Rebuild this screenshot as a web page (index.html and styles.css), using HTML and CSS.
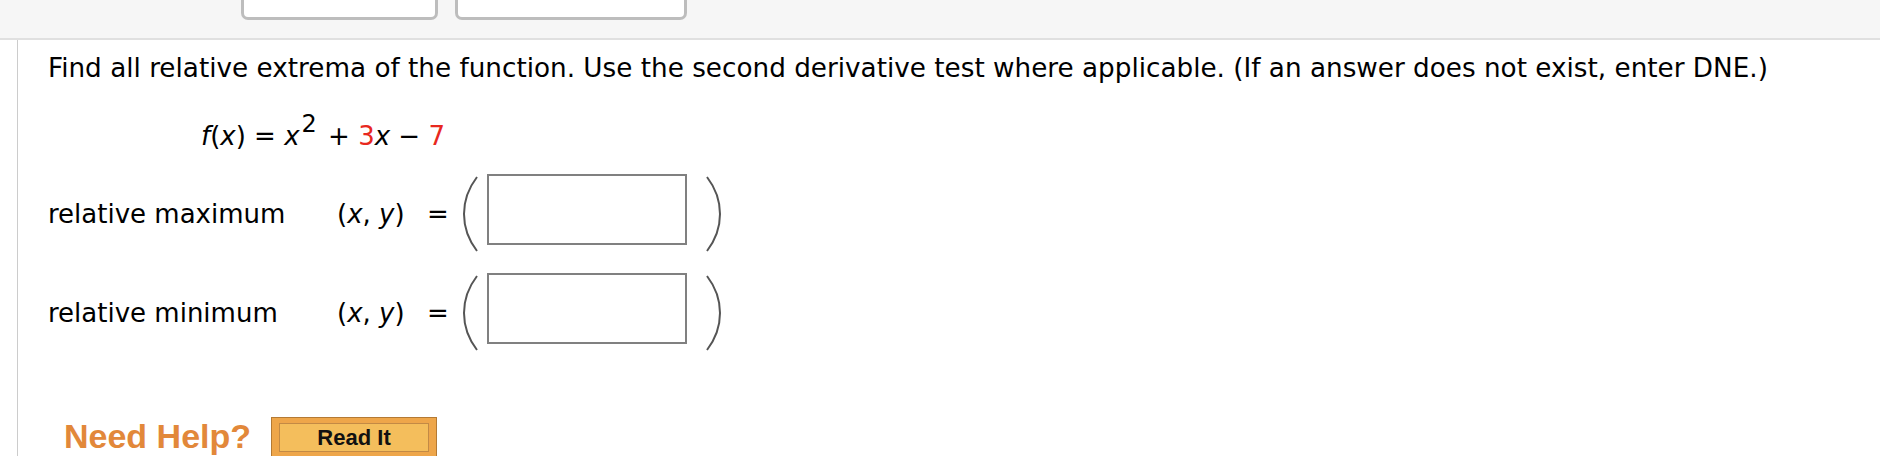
FILE: index.html
```html
<!DOCTYPE html>
<html>
<head>
<meta charset="utf-8">
<link rel="stylesheet" href="styles.css">
</head>
<body>
<div class="header">
  <div class="tab tab1"></div>
  <div class="tab tab2"></div>
</div>
<div class="main">
  <p class="prompt">Find all relative extrema of the function. Use the second derivative test where applicable. (If an answer does not exist, enter DNE.)</p>
  <p class="func"><i>f</i>(<i>x</i>) = <i>x</i><sup>2</sup> + <span class="red">3</span><i>x</i> &minus; <span class="red">7</span></p>
  <div class="row row1">
    <span class="label">relative maximum</span>
    <span class="xy">(<i>x</i>, <i>y</i>)</span>
    <span class="eq">=</span>
    <svg class="paren" width="18" height="76" viewBox="0 0 18 76"><path d="M15 1 Q2 18 2 38 Q2 58 15 75" fill="none" stroke="#555" stroke-width="2"/></svg>
    <span class="box"></span>
    <svg class="paren rparen" width="18" height="76" viewBox="0 0 18 76"><path d="M2 1 Q15 18 15 38 Q15 58 2 75" fill="none" stroke="#555" stroke-width="2"/></svg>
  </div>
  <div class="row row2">
    <span class="label">relative minimum</span>
    <span class="xy">(<i>x</i>, <i>y</i>)</span>
    <span class="eq">=</span>
    <svg class="paren" width="18" height="76" viewBox="0 0 18 76"><path d="M15 1 Q2 18 2 38 Q2 58 15 75" fill="none" stroke="#555" stroke-width="2"/></svg>
    <span class="box"></span>
    <svg class="paren rparen" width="18" height="76" viewBox="0 0 18 76"><path d="M2 1 Q15 18 15 38 Q15 58 2 75" fill="none" stroke="#555" stroke-width="2"/></svg>
  </div>
  <div class="help">
    <span class="needhelp">Need Help?</span>
    <span class="btn"><span class="btn-inner">Read It</span></span>
  </div>
</div>
</body>
</html>
```
FILE: styles.css
```css
html, body {
  margin: 0;
  padding: 0;
  height: 456px;
  overflow: hidden;
  background: #fff;
}
body {
  font-family: "DejaVu Sans", Verdana, sans-serif;
  color: #000;
}
.header {
  height: 38px;
  background: #f6f6f6;
  border-bottom: 2px solid #e0e0e0;
  display: flex;
  align-items: flex-start;
  padding-left: 241px;
  gap: 17px;
}
.tab {
  height: 17px;
  background: #fff;
  border: 3px solid #bdbdbd;
  border-top: 0;
  border-radius: 0 0 7px 7px;
}
.tab1 { width: 191px; }
.tab2 { width: 226px; }
.main {
  margin-left: 17px;
  border-left: 1px solid #cccccc;
  padding-left: 30px;
  padding-top: 13px;
  height: 420px;
}
.prompt {
  margin: 0;
  font-size: 26.25px;
  line-height: 30px;
  white-space: nowrap;
}
.func {
  margin: 38px 0 0 153px;
  font-size: 26px;
  line-height: 30px;
}
.func sup {
  font-size: 24px;
  line-height: 0;
  vertical-align: 13px;
  margin-left: 2px;
  margin-right: 3px;
}
.red { color: #e8281e; }
.row {
  display: flex;
  align-items: center;
  height: 76px;
  font-size: 26px;
  line-height: 30px;
}
.row1 { margin-top: 23px; }
.row2 { margin-top: 23px; }
.label, .xy, .eq { padding-top: 4px; flex: none; }
.label { width: 289px; }
.xy { width: 90px; }
.eq { width: 35px; }
.paren { flex: none; align-self: flex-start; margin-top: 2px; }
.box {
  flex: none;
  align-self: flex-start;
  width: 196px;
  height: 67px;
  border: 2px solid #808080;
  margin-left: 7px;
}
.rparen { margin-left: 18px; }
.help {
  display: flex;
  align-items: flex-start;
  margin-top: 67px;
  margin-left: 16px;
}
.needhelp {
  font-family: "Liberation Sans", Arial, sans-serif;
  font-weight: bold;
  font-size: 34px;
  line-height: 40px;
  color: #e2883a;
}
.btn {
  margin-left: 20px;
  margin-top: 1px;
  border: 1px solid #b47a34;
  background: #eea64a;
  padding: 5px 7px 8px;
}
.btn-inner {
  display: block;
  width: 148px;
  height: 27px;
  border: 1px solid #c38a45;
  background: #f4be5c;
  text-align: center;
  font-family: "Liberation Sans", Arial, sans-serif;
  font-weight: bold;
  font-size: 22px;
  line-height: 28px;
  color: #111;
}
```
